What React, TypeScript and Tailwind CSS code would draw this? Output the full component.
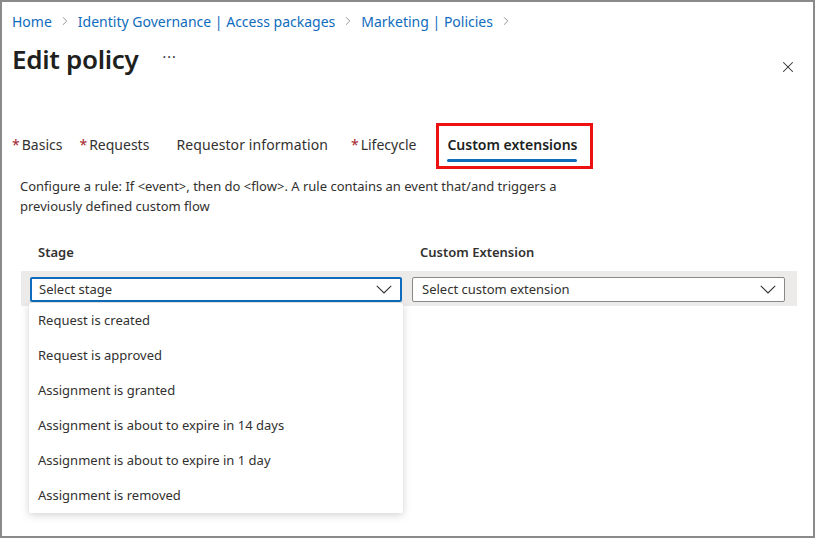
import React from "react";
import { ChevronRight, X } from "lucide-react";

const crumbs = ["Home", "Identity Governance | Access packages", "Marketing | Policies"];

const stages = [
  "Request is created",
  "Request is approved",
  "Assignment is granted",
  "Assignment is about to expire in 14 days",
  "Assignment is about to expire in 1 day",
  "Assignment is removed",
];

const Star = () => <span className="text-[#a4262c] mr-[2px]">*</span>;

const Chevron = () => (
  <svg width="16" height="9" viewBox="0 0 16 9" fill="none" className="shrink-0">
    <polyline points="0.8,0.8 8,8 15.2,0.8" stroke="#323130" strokeWidth="1.1" />
  </svg>
);

export default function App() {
  return (
    <div
      className="relative w-[815px] h-[538px] overflow-hidden bg-white border-2 border-[#8a8a8a] text-[#323130]"
      style={{ fontFamily: '"Noto Sans", "Open Sans", sans-serif' }}
    >
      {/* breadcrumb */}
      <div className="flex items-center h-[20px] mt-[9px] pl-[10px] text-[14px] text-[#0f6cbd]">
        {crumbs.map((c) => (
          <React.Fragment key={c}>
            <span>{c}</span>
            <ChevronRight className="w-[14px] h-[14px] mx-[6px] text-[#8a8886]" strokeWidth={1.5} />
          </React.Fragment>
        ))}
      </div>

      {/* title */}
      <div className="flex items-start justify-between pl-[10px] pr-[16px] mt-[11px]">
        <div className="flex items-center h-[34px]">
          <h1 className="text-[26px] font-semibold text-[#201f1e] tracking-[-0.3px]">Edit policy</h1>
          <span className="ml-[24px] text-[14px] text-[#323130] leading-none -mt-[4px] tracking-[1px]">···</span>
        </div>
        <X className="w-[18px] h-[18px] mt-[16px] text-[#323130]" strokeWidth={1.4} />
      </div>

      {/* tabs */}
      <div className="flex items-start h-[46px] mt-[47px] pl-[10px] text-[14px]">
        <div className="flex items-center h-[20px] mt-[11px]"><Star />Basics</div>
        <div className="flex items-center h-[20px] mt-[11px] ml-[17px]"><Star />Requests</div>
        <div className="flex items-center h-[20px] mt-[11px] ml-[27px] tracking-[0.1px]">Requestor information</div>
        <div className="flex items-center h-[20px] mt-[11px] ml-[23px]"><Star />Lifecycle</div>
        <div className="ml-[20px] h-[46px] border-[3px] border-[#ee1111] pl-[8px] pr-[13px]">
          <div className="h-[20px] mt-[8px] flex items-center font-semibold text-[#201f1e]">Custom extensions</div>
          <div className="h-[3px] mt-[5px] bg-[#0f6cbd] rounded-full" />
        </div>
      </div>

      {/* description */}
      <p className="mt-[7px] ml-[18px] max-w-[575px] text-[13px] leading-[20px]">
        Configure a rule: If &lt;event&gt;, then do &lt;flow&gt;. A rule contains an event that/and triggers a
        previously defined custom flow
      </p>

      {/* table */}
      <div className="mt-[27px] ml-[19px] mr-[16px]">
        <div className="flex text-[13px] font-semibold h-[28px] items-start">
          <div className="w-[390px] pl-[17px]">Stage</div>
          <div className="pl-[9px]">Custom Extension</div>
        </div>
        <div className="relative flex gap-[10px] bg-[#edebe9] h-[35px] pl-[9px] pt-[6px]">
          <div className="relative w-[372px] h-[25px] bg-white border-2 border-[#0f6cbd] rounded-[2px] flex items-center justify-between pl-[7px] pr-[8px] text-[13px]">
            <span>Select stage</span>
            <Chevron />
            <ul className="absolute left-[-3px] top-[24px] w-[374px] bg-white shadow-[0_2px_8px_rgba(0,0,0,0.18)] rounded-[2px] z-10">
              {stages.map((s) => (
                <li key={s} className="h-[35px] flex items-center pl-[9px] text-[13px] text-[#323130]">
                  {s}
                </li>
              ))}
            </ul>
          </div>
          <div className="w-[373px] h-[25px] bg-white border border-[#8a8886] rounded-[2px] flex items-center justify-between pl-[9px] pr-[8px] text-[13px]">
            <span>Select custom extension</span>
            <Chevron />
          </div>
        </div>
      </div>
    </div>
  );
}
